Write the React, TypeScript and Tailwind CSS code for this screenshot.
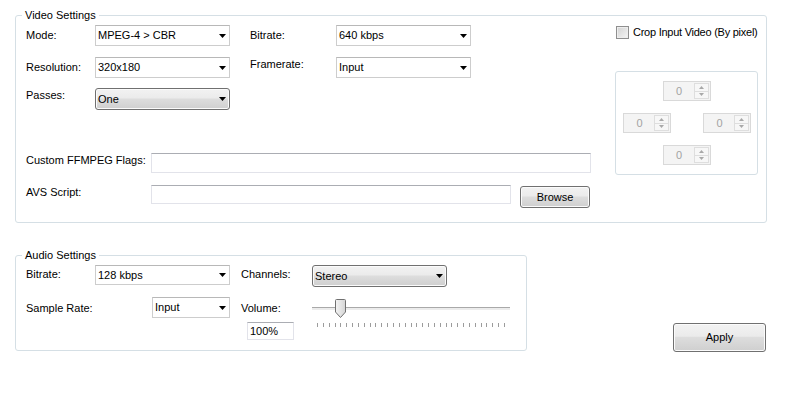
import React from "react";

const winButton =
  "rounded-[3px] border border-[#707070] bg-[linear-gradient(to_bottom,#f2f2f2,#ebebeb_45%,#dddddd_50%,#cfcfcf)] shadow-[inset_0_0_0_1px_#fbfbfb]";

function Arrow() {
  return (
    <svg width="7" height="4" viewBox="0 0 7 4" className="shrink-0">
      <path d="M0 0h7L3.5 4z" fill="#000" />
    </svg>
  );
}

function Combo({ value, className, raised = false }: { value: string; className: string; raised?: boolean }) {
  const skin = raised ? winButton : "border border-[#cdcdcd] border-t-[#b8b8b8] bg-white";
  return (
    <div className={`flex shrink-0 items-center justify-between pl-[2px] pr-[3px] ${skin} ${className}`}>
      <span>{value}</span>
      <Arrow />
    </div>
  );
}

function TextBox({ value = "", className }: { value?: string; className: string }) {
  return (
    <div className={`flex shrink-0 items-center border border-[#e2e3ea] border-t-[#abadb3] bg-white pl-[2px] ${className}`}>
      {value}
    </div>
  );
}

function SpinArrow({ up }: { up: boolean }) {
  return (
    <svg width="5" height="3" viewBox="0 0 5 3">
      <path d={up ? "M0 3h5L2.5 0z" : "M0 0h5L2.5 3z"} fill="#a8a8a8" />
    </svg>
  );
}

function Spinner() {
  return (
    <div className="flex h-[20px] w-[48px] border border-[#d9d9d9] bg-[#f4f4f4]">
      <div className="flex flex-1 items-center justify-center pl-[1px] text-[#a3a3a3]">0</div>
      <div className="my-[1px] mr-[1px] flex w-[15px] flex-col border border-[#dedede] bg-[#f7f7f7]">
        <div className="flex flex-1 items-center justify-center border-b border-[#dedede]">
          <SpinArrow up />
        </div>
        <div className="flex flex-1 items-center justify-center">
          <SpinArrow up={false} />
        </div>
      </div>
    </div>
  );
}

function Thumb() {
  return (
    <svg width="11" height="19" viewBox="0 0 11 19">
      <defs>
        <linearGradient id="thumbFill" x1="0" y1="0" x2="1" y2="0">
          <stop offset="0" stopColor="#f4f4f4" />
          <stop offset="1" stopColor="#d4d4d4" />
        </linearGradient>
      </defs>
      <path
        d="M1.5 0.5h8a1 1 0 0 1 1 1v11.5l-5 5.5-5-5.5V1.5a1 1 0 0 1 1-1z"
        fill="url(#thumbFill)"
        stroke="#707070"
      />
    </svg>
  );
}

const ticks = Array.from({ length: 33 }, (_, i) => i);

export default function App() {
  return (
    <div className="h-[393px] w-[795px] overflow-hidden bg-white font-['Liberation_Sans',Arial,sans-serif] text-[11px] leading-[13px] text-black">
      <fieldset className="ml-[15px] mt-[9px] w-[752px] rounded-[3px] border border-[#d5dfe5] pb-[14px] pl-[10px] pr-[8px] pt-[3px]">
        <legend className="ml-[-4px] px-[3px] leading-[13px]">Video Settings</legend>
        <div className="flex">
          <div className="w-[565px] shrink-0">
            <div className="flex h-[21px] items-center">
              <span className="w-[69px]">Mode:</span>
              <Combo value="MPEG-4 > CBR" className="h-[21px] w-[135px]" />
              <span className="ml-[20px] w-[86px]">Bitrate:</span>
              <Combo value="640 kbps" className="h-[21px] w-[135px]" />
            </div>
            <div className="mt-[11px] flex h-[21px] items-center">
              <span className="w-[69px]">Resolution:</span>
              <Combo value="320x180" className="h-[21px] w-[135px]" />
              <span className="ml-[20px] mt-[1px] w-[86px] self-start">Framerate:</span>
              <Combo value="Input" className="h-[21px] w-[135px]" />
            </div>
            <div className="mt-[10px] flex items-start">
              <span className="mt-[1px] w-[69px]">Passes:</span>
              <Combo value="One" raised className="h-[22px] w-[135px]" />
            </div>
            <div className="mt-[43px] flex items-start">
              <span className="mt-[1px] w-[125px]">Custom FFMPEG Flags:</span>
              <TextBox className="h-[20px] w-[440px]" />
            </div>
            <div className="mt-[12px] flex items-start">
              <span className="mt-[1px] w-[125px]">AVS Script:</span>
              <TextBox className="h-[19px] w-[360px]" />
              <button className={`ml-[9px] mt-[1px] flex h-[22px] w-[70px] items-center justify-center ${winButton}`}>
                Browse
              </button>
            </div>
          </div>
          <div className="ml-[24px] w-[143px] shrink-0">
            <label className="ml-[1px] mt-[1px] flex items-center whitespace-nowrap">
              <span className="h-[13px] w-[13px] shrink-0 border border-[#8f8f8f] bg-[linear-gradient(135deg,#d2d2d2,#f6f6f6)] shadow-[inset_0_0_0_1px_#eeeeee]" />
              <span className="ml-[4px] tracking-[-0.25px]">Crop Input Video (By pixel)</span>
            </label>
            <div className="mt-[32px] flex h-[104px] w-[143px] flex-col gap-[12px] rounded-[3px] border border-[#d5dfe5] pt-[9px]">
              <div className="flex justify-center">
                <Spinner />
              </div>
              <div className="flex justify-between pl-[7px] pr-[6px]">
                <Spinner />
                <Spinner />
              </div>
              <div className="flex justify-center">
                <Spinner />
              </div>
            </div>
          </div>
        </div>
      </fieldset>

      <div className="mt-[26px] flex items-end">
        <fieldset className="ml-[15px] w-[512px] rounded-[3px] border border-[#d5dfe5] pb-[10px] pl-[10px] pt-[3px]">
          <legend className="ml-[-4px] px-[3px] leading-[13px]">Audio Settings</legend>
          <div className="flex items-start">
            <span className="mt-[3px] w-[69px]">Bitrate:</span>
            <Combo value="128 kbps" className="h-[20px] w-[135px]" />
            <span className="ml-[11px] mt-[3px] w-[71px]">Channels:</span>
            <Combo value="Stereo" raised className="h-[22px] w-[135px]" />
          </div>
          <div className="mt-[10px] flex items-start">
            <span className="mt-[5px] w-[126px]">Sample Rate:</span>
            <Combo value="Input" className="h-[21px] w-[78px]" />
            <div className="ml-[11px] w-[71px]">
              <div className="mt-[5px]">Volume:</div>
              <TextBox value="100%" className="ml-[6px] mt-[7px] h-[18px] w-[47px]" />
            </div>
            <div className="relative h-[36px] w-[198px]">
              <div className="mt-[10px] h-[3px] border-t border-[#a9a9a9] bg-[#ececec]" />
              <div className="absolute left-[23px] top-[2px]">
                <Thumb />
              </div>
              <div className="mx-[5px] mt-[13px] flex justify-between">
                {ticks.map((t) => (
                  <span key={t} className="h-[4px] w-px bg-[#9c9c9c]" />
                ))}
              </div>
            </div>
          </div>
        </fieldset>
        <button className={`mb-[-1px] ml-[146px] flex h-[29px] w-[93px] items-center justify-center ${winButton}`}>
          Apply
        </button>
      </div>
    </div>
  );
}
